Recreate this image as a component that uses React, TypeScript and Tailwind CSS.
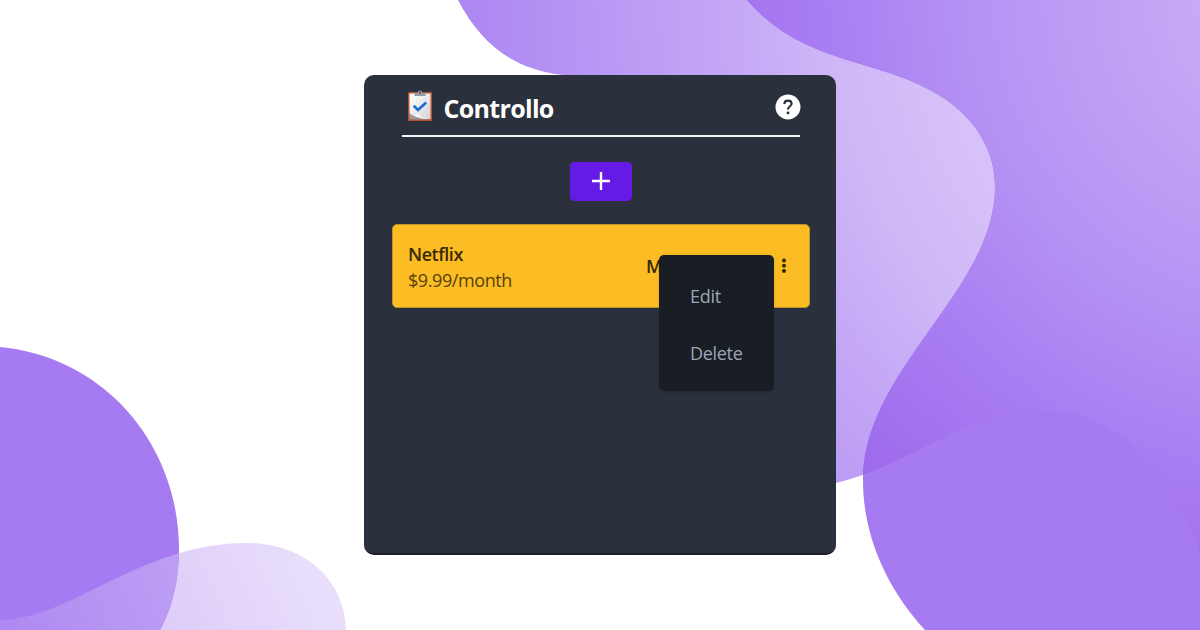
function Backdrop() {
  return (
    <svg className="absolute inset-0" width="1200" height="630" viewBox="0 0 1200 630" aria-hidden="true">
      <defs>
        <radialGradient id="veil" gradientUnits="userSpaceOnUse" cx="1300" cy="0" r="840">
          <stop offset="0.427" stopColor="#d6c2f8" />
          <stop offset="0.565" stopColor="#ceb6f7" />
          <stop offset="0.667" stopColor="#c5a9f6" />
          <stop offset="0.762" stopColor="#be9ff5" />
          <stop offset="1" stopColor="#ad86f2" />
        </radialGradient>
        <radialGradient id="overlap" gradientUnits="userSpaceOnUse" cx="1300" cy="0" r="640">
          <stop offset="0.156" stopColor="#c6aaf5" />
          <stop offset="0.5" stopColor="#b693f4" />
          <stop offset="0.742" stopColor="#a97ef2" />
          <stop offset="1" stopColor="#9d6aec" />
        </radialGradient>
        <linearGradient id="wave" gradientUnits="userSpaceOnUse" x1="150" y1="640" x2="330" y2="560">
          <stop offset="0" stopColor="#ddcbf9" />
          <stop offset="1" stopColor="#eae0fb" />
        </linearGradient>
        <linearGradient id="waveOverlap" gradientUnits="userSpaceOnUse" x1="0" y1="640" x2="180" y2="560">
          <stop offset="0" stopColor="#ae88f1" />
          <stop offset="1" stopColor="#bd9ff4" />
        </linearGradient>
        <clipPath id="veilClip">
          <path d="M458 0C480 42 511 69 563 75L836 483C905 468 965 411 1047 411C1118 411 1165 470 1200 553V0Z" />
        </clipPath>
        <clipPath id="discClip">
          <path d="M0 347C105 357 179 445 179 550C179 580 172 608 160 630H0Z" />
        </clipPath>
      </defs>
      <path
        fill="url(#veil)"
        d="M458 0C480 42 511 69 563 75L836 483C905 468 965 411 1047 411C1118 411 1165 470 1200 553V0Z"
      />
      <path
        fill="#a67bf1"
        d="M747 0C800 62 870 58 930 90C975 114 995 150 995 187C995 290 863 370 863 480C863 540 890 592 925 630H1200V0Z"
      />
      <g clipPath="url(#veilClip)">
        <path
          fill="url(#overlap)"
          d="M747 0C800 62 870 58 930 90C975 114 995 150 995 187C995 290 863 370 863 480C863 540 890 592 925 630H1200V0Z"
        />
      </g>
      <path fill="url(#wave)" d="M0 620C70 620 140 543 247 543C305 543 345 580 346 630H0Z" />
      <path fill="#a67bf1" d="M0 347C105 357 179 445 179 550C179 580 172 608 160 630H0Z" />
      <g clipPath="url(#discClip)">
        <path fill="url(#waveOverlap)" d="M0 620C70 620 140 543 247 543C305 543 345 580 346 630H0Z" />
      </g>
    </svg>
  );
}

function ClipboardIcon() {
  return (
    <svg className="mb-[2px]" width="24" height="32" viewBox="0 0 24 32" aria-hidden="true">
      <defs>
        <linearGradient id="paper" x1="0" y1="0" x2="1" y2="1">
          <stop offset="0" stopColor="#ffffff" />
          <stop offset="1" stopColor="#d5d3da" />
        </linearGradient>
      </defs>
      <rect x="0" y="2" width="24" height="29" rx="1.2" fill="#b4532f" />
      <path fill="#a39a9f" d="M1.5 23L22.5 29.5H1.5Z" />
      <path fill="url(#paper)" d="M1.5 3.5H22.5V29C13 28.5 8 26.500 1.500 23.500Z" />
      <path fill="#f7f6f9" d="M2 23.500C6 25.500 9 25 10 23.500C11.500 26.500 16 28.500 22 29C13 29 7 27 2 23.500Z" />
      <path fill="#9a989d" d="M6.500 6V4Q6.500 2.800 8 2.800H9.500Q9.800 .5 12 .5T14.500 2.800H16Q17.500 2.800 17.500 4V6Z" />
      <circle cx="12" cy="2.500" r="1" fill="#4c4b52" />
      <path d="M5.700 15.800L10 20L18.200 12.500" fill="none" stroke="#1c6fd8" strokeWidth="2.700" />
    </svg>
  );
}

function HelpIcon() {
  return (
    <svg width="26" height="26" viewBox="0 0 26 26" aria-hidden="true">
      <circle cx="13" cy="13" r="12.500" fill="#fff" />
      <path
        d="M9.400 9.900C9.400 7.900 11 6.600 13 6.600S16.600 7.900 16.600 9.800C16.600 12.200 13 12.400 13 15.600"
        fill="none"
        stroke="#2a303c"
        strokeWidth="2.100"
      />
      <circle cx="13" cy="18.900" r="1.450" fill="#2a303c" />
    </svg>
  );
}

export default function App() {
  return (
    <main className="relative flex h-[630px] w-[1200px] items-center justify-center overflow-hidden bg-white font-['Open_Sans','Noto_Sans',sans-serif]">
      <Backdrop />
      <section className="z-10 flex h-[480px] w-[472px] flex-col items-center gap-[23px] rounded-[10px] border-b-2 border-[#1d202b] bg-[#2a303c] pl-[2px]">
        <header className="mb-[2px] flex h-[61.500px] w-[398px] items-center justify-between border-b-2 border-[#f4f4f5] pt-[6px] pb-[1px] pl-[5.500px]">
          <div className="flex items-center gap-3">
            <ClipboardIcon />
            <h1 className="pt-[2px] text-[25px] leading-8 font-bold tracking-[-0.680px] text-white">Controllo</h1>
          </div>
          <button type="button" aria-label="Help" className="-mr-px">
            <HelpIcon />
          </button>
        </header>
        <button
          type="button"
          aria-label="Add"
          className="flex h-[39.500px] w-[61.500px] items-center justify-center rounded-[4.500px] bg-[#661ae6]"
        >
          <svg width="18" height="18" viewBox="0 0 18 18" aria-hidden="true">
            <path d="M9 0V18M0 9H18" stroke="#fff" strokeWidth="2.400" />
          </svg>
        </button>
        <article className="relative flex h-[84px] w-[418px] items-center justify-between rounded-[5px] border border-[#c1932b] bg-[#fbbd23] px-[15px] text-[#382800]">
          <div className="flex flex-col pt-[2px] text-[18px] leading-[26px]">
            <h2 className="font-semibold tracking-[-0.450px]">Netflix</h2>
            <p className="tracking-[-0.420px] text-[#584108]">$9.99/month</p>
          </div>
          <div className="flex w-[148px] items-center justify-between">
            <span className="text-[18px] font-semibold">M</span>
            <svg width="20" height="20" viewBox="0 0 20 20" aria-hidden="true">
              <g fill="#382800">
                <circle cx="10" cy="4.500" r="2" />
                <circle cx="10" cy="9.800" r="2" />
                <circle cx="10" cy="15.100" r="2" />
              </g>
            </svg>
          </div>
          <ul className="absolute top-[30px] right-[35px] flex h-[136px] w-[115px] flex-col rounded-[5px] bg-[#191d24] pt-[12.500px] pl-[31px] text-[18px] tracking-[-0.300px] text-[#9ea6b5] shadow-sm">
            <li className="flex h-[57px] items-center">Edit</li>
            <li className="flex h-[57px] items-center">Delete</li>
          </ul>
        </article>
      </section>
    </main>
  );
}
